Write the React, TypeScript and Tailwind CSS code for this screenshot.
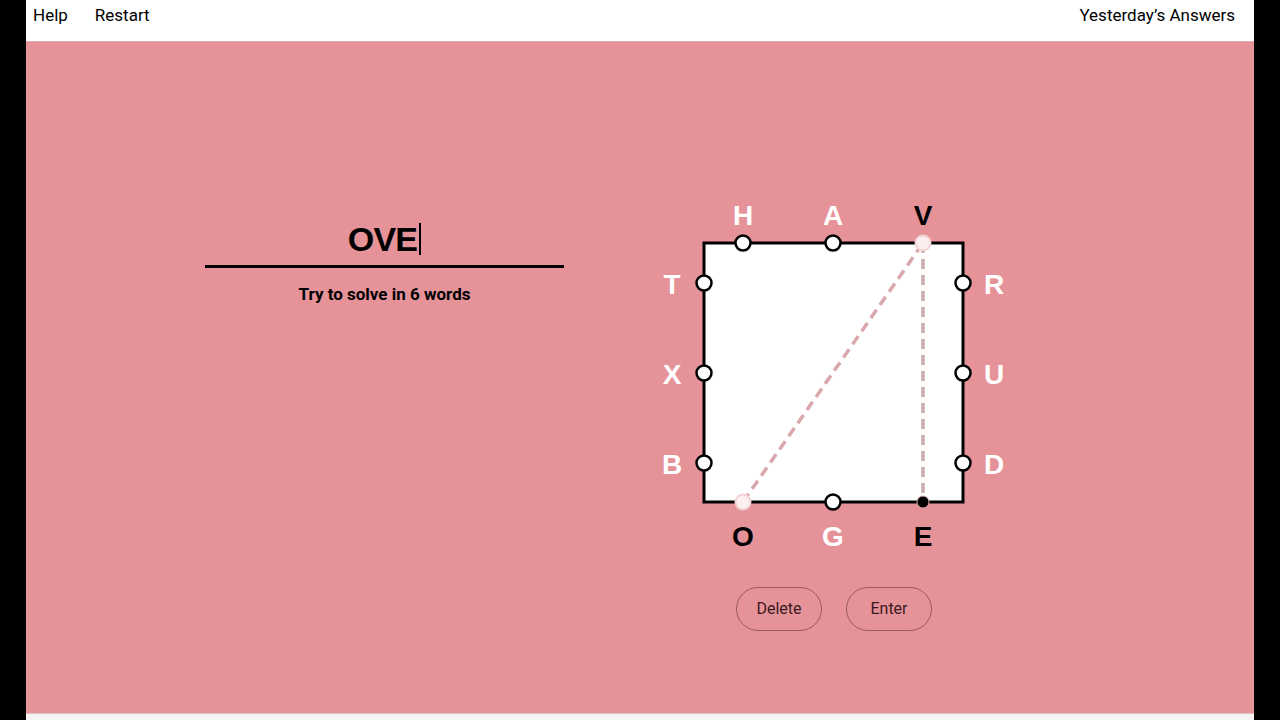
import React from 'react';

const PINK = '#e69299';

type Side = { letter: string; x: number; y: number; cx: number; cy: number; state: 'idle' | 'used' | 'last' };

const nodes: Side[] = [
  { letter: 'H', x: 743, y: 215, cx: 743, cy: 243, state: 'idle' },
  { letter: 'A', x: 833, y: 215, cx: 833, cy: 243, state: 'idle' },
  { letter: 'V', x: 923, y: 215, cx: 923, cy: 243, state: 'used' },
  { letter: 'T', x: 672, y: 284, cx: 704, cy: 283, state: 'idle' },
  { letter: 'X', x: 672, y: 374, cx: 704, cy: 373, state: 'idle' },
  { letter: 'B', x: 672, y: 464, cx: 704, cy: 463, state: 'idle' },
  { letter: 'R', x: 994, y: 284, cx: 963, cy: 283, state: 'idle' },
  { letter: 'U', x: 994, y: 374, cx: 963, cy: 373, state: 'idle' },
  { letter: 'D', x: 994, y: 464, cx: 963, cy: 463, state: 'idle' },
  { letter: 'O', x: 743, y: 536, cx: 743, cy: 502, state: 'used' },
  { letter: 'G', x: 833, y: 536, cx: 833, cy: 502, state: 'idle' },
  { letter: 'E', x: 923, y: 536, cx: 923, cy: 502, state: 'last' },
];

function Board() {
  return (
    <svg width={370} height={370} viewBox="650 190 370 370" className="block">
      <rect x={704} y={243} width={259} height={259} fill="#ffffff" stroke="#000" strokeWidth={3} />
      <line x1={743} y1={502} x2={923} y2={243} stroke="#d9a7ac" strokeWidth={3.5} strokeDasharray="10 6" />
      <line x1={923} y1={243} x2={923} y2={502} stroke="#cdaaae" strokeWidth={3.5} strokeDasharray="10 6" />
      {nodes.map((n) => (
        <g key={n.letter}>
          {n.state === 'idle' && <circle cx={n.cx} cy={n.cy} r={7.5} fill="#fff" stroke="#000" strokeWidth={2.5} />}
          {n.state === 'used' && <circle cx={n.cx} cy={n.cy} r={7.5} fill="#fcefef" stroke="#f2d4d6" strokeWidth={2} />}
          {n.state === 'last' && <circle cx={n.cx} cy={n.cy} r={6} fill="#000" stroke="#d9a7ac" strokeWidth={1} />}
          <text
            x={n.x}
            y={n.y}
            textAnchor="middle"
            dominantBaseline="central"
            fontSize={28}
            fontWeight={700}
            fontFamily="'Liberation Sans', Arial, sans-serif"
            fill={n.state === 'idle' ? '#ffffff' : '#000000'}
          >
            {n.letter}
          </text>
        </g>
      ))}
    </svg>
  );
}

export default function App() {
  return (
    <div className="w-full h-[720px] bg-black flex justify-center overflow-hidden" style={{ fontFamily: 'Roboto, "Liberation Sans", sans-serif' }}>
      <div className="w-[1228px] flex flex-col">
        {/* Header */}
        <header className="h-[42px] bg-white flex items-start justify-between px-[7px] pt-[3px] text-[17px] text-black border-b border-[#d8b0b3]">
          <nav className="flex gap-[27px]">
            <span>Help</span>
            <span>Restart</span>
          </nav>
          <span className="mr-[12px]">Yesterday’s Answers</span>
        </header>

        {/* Game */}
        <main className="flex-1 flex" style={{ backgroundColor: PINK }}>
          <section className="ml-[179px] mt-[175px] w-[359px] flex flex-col items-center">
            <div className="h-[44px] flex items-center justify-center text-[34px] font-bold leading-none text-black tracking-tight" style={{ fontFamily: '"Liberation Sans", Arial, sans-serif' }}>
              OVE<span className="ml-[2px] w-[2px] h-[32px] bg-black" />
            </div>
            <div className="mt-[4px] w-full h-[3px] bg-black" />
            <p className="mt-[18px] text-[17px] font-bold text-black leading-none">Try to solve in 6 words</p>
          </section>

          <section className="ml-[86px] mt-[148px] flex flex-col items-center">
            <Board />
            <div className="mt-[27px] ml-[-2px] flex gap-[24px]">
              <button className="w-[86px] h-[44px] rounded-full border border-[#9a5a60] text-[16px] text-[#3a1a1e]">Delete</button>
              <button className="w-[86px] h-[44px] rounded-full border border-[#9a5a60] text-[16px] text-[#3a1a1e]">Enter</button>
            </div>
          </section>
        </main>

        <footer className="h-[7px] bg-[#f6f4f4] border-t border-[#d8c4c6]" />
      </div>
    </div>
  );
}
